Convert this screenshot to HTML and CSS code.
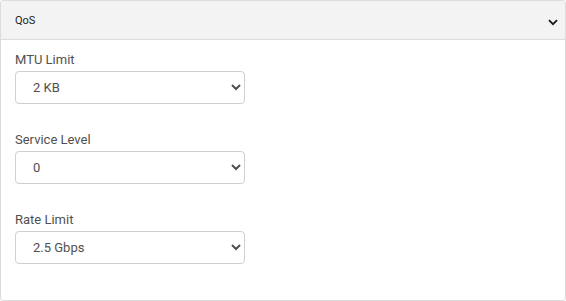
FILE: index.html
```html
<!DOCTYPE html>
<html>
<head>
<meta charset="utf-8">
<link rel="stylesheet" href="styles.css">
</head>
<body>
<div class="card">
  <div class="card-header">
    <span class="title">QoS</span>
    <svg class="chev" width="10" height="7" viewBox="0 0 10 7"><path d="M1 1.2 L5 5.2 L9 1.2" fill="none" stroke="#1a1a1a" stroke-width="1.8"/></svg>
  </div>
  <div class="card-body">
    <div class="field">
      <label class="label">MTU Limit</label>
      <select class="select"><option>2 KB</option></select>
    </div>
    <div class="field">
      <label class="label">Service Level</label>
      <select class="select"><option>0</option></select>
    </div>
    <div class="field">
      <label class="label">Rate Limit</label>
      <select class="select"><option>2.5 Gbps</option></select>
    </div>
  </div>
</div>
</body>
</html>
```
FILE: styles.css
```css
html, body { margin: 0; padding: 0; background: #fff; }
body { font-family: Roboto, "Liberation Sans", sans-serif; color: #333; }
.card {
  width: 564px;
  height: 299px;
  border: 1px solid #dcdcdc;
  border-radius: 3px;
  overflow: hidden;
  display: flex;
  flex-direction: column;
}
.card-header {
  height: 38px;
  background: #f3f3f3;
  border-bottom: 1px solid #dcdcdc;
  display: flex;
  align-items: center;
  justify-content: space-between;
  padding: 0 7px 0 14px;
}
.title { font-size: 11px; color: #222; }
.chev { margin-top: 5px; }
.card-body {
  padding: 11px 14px 0 14px;
  display: flex;
  flex-direction: column;
  gap: 27px;
}
.field { display: flex; flex-direction: column; gap: 3px; }
.label { font-size: 13px; color: #505050; line-height: 17px; }
.select {
  width: 230px;
  height: 33px;
  border: 1px solid #cfcfcf;
  border-radius: 4px;
  background: #fff;
  font-family: Roboto, "Liberation Sans", sans-serif;
  font-size: 13px;
  color: #505050;
  padding: 0 8px 0 13px;
}
```
